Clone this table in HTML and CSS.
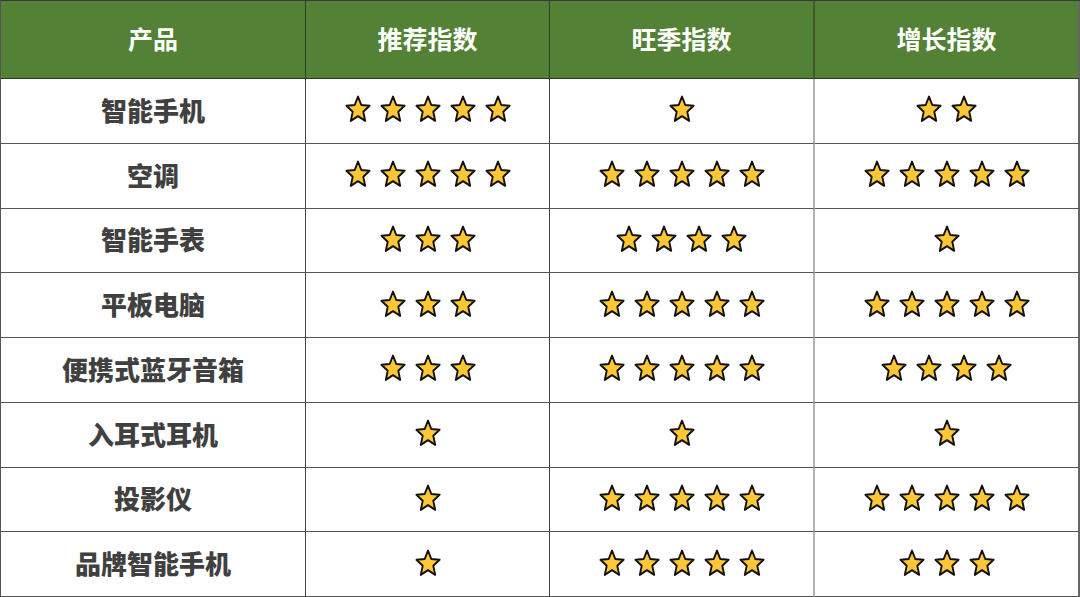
FILE: index.html
```html
<!DOCTYPE html>
<html lang="zh">
<head>
<meta charset="utf-8">
<link rel="stylesheet" href="styles.css">
</head>
<body>
<svg class="defs" width="0" height="0" aria-hidden="true">
  <symbol id="star" viewBox="0 0 28 28">
    <path d="M14 1.6 L17.3 10.0 L25.6 10.8 L19.3 16.8 L21.2 25.9 L14 21.1 L6.8 25.9 L8.7 16.8 L2.4 10.8 L10.7 10.0 Z" fill="#FFC735" stroke="#111" stroke-width="1.9" stroke-linejoin="round"/>
  </symbol>
</svg>
<div class="table">
  <div class="cell head">产品</div>
  <div class="cell head">推荐指数</div>
  <div class="cell head c3">旺季指数</div>
  <div class="cell head c4">增长指数</div>

  <div class="cell name">智能手机</div>
  <div class="cell stars"><svg><use href="#star"/></svg><svg><use href="#star"/></svg><svg><use href="#star"/></svg><svg><use href="#star"/></svg><svg><use href="#star"/></svg></div>
  <div class="cell stars c3"><svg><use href="#star"/></svg></div>
  <div class="cell stars c4"><svg><use href="#star"/></svg><svg><use href="#star"/></svg></div>

  <div class="cell name">空调</div>
  <div class="cell stars"><svg><use href="#star"/></svg><svg><use href="#star"/></svg><svg><use href="#star"/></svg><svg><use href="#star"/></svg><svg><use href="#star"/></svg></div>
  <div class="cell stars c3"><svg><use href="#star"/></svg><svg><use href="#star"/></svg><svg><use href="#star"/></svg><svg><use href="#star"/></svg><svg><use href="#star"/></svg></div>
  <div class="cell stars c4"><svg><use href="#star"/></svg><svg><use href="#star"/></svg><svg><use href="#star"/></svg><svg><use href="#star"/></svg><svg><use href="#star"/></svg></div>

  <div class="cell name">智能手表</div>
  <div class="cell stars"><svg><use href="#star"/></svg><svg><use href="#star"/></svg><svg><use href="#star"/></svg></div>
  <div class="cell stars c3"><svg><use href="#star"/></svg><svg><use href="#star"/></svg><svg><use href="#star"/></svg><svg><use href="#star"/></svg></div>
  <div class="cell stars c4"><svg><use href="#star"/></svg></div>

  <div class="cell name">平板电脑</div>
  <div class="cell stars"><svg><use href="#star"/></svg><svg><use href="#star"/></svg><svg><use href="#star"/></svg></div>
  <div class="cell stars c3"><svg><use href="#star"/></svg><svg><use href="#star"/></svg><svg><use href="#star"/></svg><svg><use href="#star"/></svg><svg><use href="#star"/></svg></div>
  <div class="cell stars c4"><svg><use href="#star"/></svg><svg><use href="#star"/></svg><svg><use href="#star"/></svg><svg><use href="#star"/></svg><svg><use href="#star"/></svg></div>

  <div class="cell name">便携式蓝牙音箱</div>
  <div class="cell stars"><svg><use href="#star"/></svg><svg><use href="#star"/></svg><svg><use href="#star"/></svg></div>
  <div class="cell stars c3"><svg><use href="#star"/></svg><svg><use href="#star"/></svg><svg><use href="#star"/></svg><svg><use href="#star"/></svg><svg><use href="#star"/></svg></div>
  <div class="cell stars c4"><svg><use href="#star"/></svg><svg><use href="#star"/></svg><svg><use href="#star"/></svg><svg><use href="#star"/></svg></div>

  <div class="cell name">入耳式耳机</div>
  <div class="cell stars"><svg><use href="#star"/></svg></div>
  <div class="cell stars c3"><svg><use href="#star"/></svg></div>
  <div class="cell stars c4"><svg><use href="#star"/></svg></div>

  <div class="cell name">投影仪</div>
  <div class="cell stars"><svg><use href="#star"/></svg></div>
  <div class="cell stars c3"><svg><use href="#star"/></svg><svg><use href="#star"/></svg><svg><use href="#star"/></svg><svg><use href="#star"/></svg><svg><use href="#star"/></svg></div>
  <div class="cell stars c4"><svg><use href="#star"/></svg><svg><use href="#star"/></svg><svg><use href="#star"/></svg><svg><use href="#star"/></svg><svg><use href="#star"/></svg></div>

  <div class="cell name">品牌智能手机</div>
  <div class="cell stars"><svg><use href="#star"/></svg></div>
  <div class="cell stars c3"><svg><use href="#star"/></svg><svg><use href="#star"/></svg><svg><use href="#star"/></svg><svg><use href="#star"/></svg><svg><use href="#star"/></svg></div>
  <div class="cell stars c4"><svg><use href="#star"/></svg><svg><use href="#star"/></svg><svg><use href="#star"/></svg></div>
</div>
</body>
</html>
```

FILE: styles.css
```css
html, body {
  margin: 0;
  padding: 0;
  background: #fff;
}
.defs {
  position: absolute;
  width: 0;
  height: 0;
  overflow: hidden;
}
.table {
  box-sizing: border-box;
  width: 1080px;
  height: 597px;
  display: grid;
  grid-template-columns: 305px 244px 265px 1fr;
  grid-template-rows: 78px repeat(8, 1fr);
  border-top: 1px solid #3a3a3a;
  border-left: 1px solid #555;
  font-family: "Noto Sans CJK SC", "Noto Sans", sans-serif;
}
.cell {
  box-sizing: border-box;
  display: flex;
  align-items: center;
  justify-content: center;
  padding-bottom: 3px;
  border-right: 1px solid #444;
  border-bottom: 1px solid #555;
}
.head {
  background: #538135;
  color: #fff;
  font-size: 25px;
  font-weight: 700;
  padding-bottom: 4px;
  border-bottom-color: #2c3a24;
  border-right-color: #2f3f28;
}
.name {
  color: #404040;
  font-size: 26px;
  font-weight: 900;
}
.c3 {
  border-right: 2px solid #b3b3b3;
}
.head.c3 {
  border-right: 2px solid #3f5a30;
}
.c4 {
  border-right: 2px solid #666;
}
.stars {
  gap: 7px;
}
.stars svg {
  width: 28px;
  height: 28px;
}
```
